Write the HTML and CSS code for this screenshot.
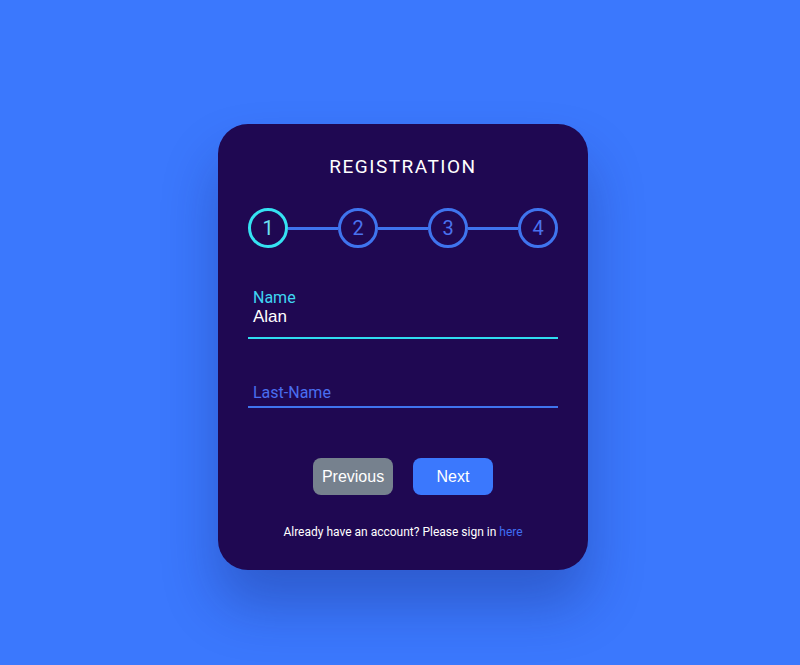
FILE: index.html
```html
<!DOCTYPE html>
<html>
<head>
<meta charset="utf-8">
<link rel="stylesheet" href="styles.css">
</head>
<body>
<div class="card">
  <h1 class="title">REGISTRATION</h1>
  <div class="steps">
    <div class="step active">1</div>
    <div class="line"></div>
    <div class="step">2</div>
    <div class="line"></div>
    <div class="step">3</div>
    <div class="line"></div>
    <div class="step">4</div>
  </div>
  <div class="field filled">
    <div class="label">Name</div>
    <div class="value">Alan</div>
  </div>
  <div class="field empty">
    <div class="placeholder">Last-Name</div>
  </div>
  <div class="buttons">
    <button class="btn prev">Previous</button>
    <button class="btn next">Next</button>
  </div>
  <p class="footer">Already have an account? Please sign in <a class="link">here</a></p>
</div>
</body>
</html>
```
FILE: styles.css
```css
html, body {
  margin: 0;
  padding: 0;
}
body {
  box-sizing: border-box;
  background: #3b78fd;
  height: 665px;
  overflow: hidden;
  padding-left: 6px;
  font-family: Roboto, "Liberation Sans", sans-serif;
}
.card {
  box-sizing: border-box;
  width: 370px;
  margin: 124px auto 0;
  padding: 31px 30px 31px;
  background: #1f0852;
  border-radius: 30px;
  box-shadow: 0 35px 55px rgba(20, 30, 110, 0.32);
}
.title {
  margin: 0;
  text-align: center;
  color: #ffffff;
  font-weight: 400;
  font-size: 19px;
  line-height: 24px;
  letter-spacing: 1.5px;
}
.steps {
  display: flex;
  align-items: center;
  margin-top: 29px;
}
.step {
  box-sizing: border-box;
  width: 40px;
  height: 40px;
  flex: none;
  border: 3px solid #3f74ee;
  border-radius: 50%;
  display: flex;
  align-items: center;
  justify-content: center;
  color: #4a72ee;
  font-size: 20px;
}
.step.active {
  border-color: #35e2f2;
  color: #6ee0f2;
}
.line {
  flex: 1;
  height: 3px;
  background: #3f74ee;
}
.field {
  padding-left: 5px;
  border-bottom: 2px solid #3f74ee;
}
.field.filled {
  margin-top: 41px;
  padding-bottom: 11px;
  border-bottom-color: #2fdcf0;
}
.label {
  color: #3fd6f2;
  font-size: 16px;
  line-height: 18px;
}
.value {
  color: #ffffff;
  font-family: "Liberation Sans", Arial, sans-serif;
  font-size: 17px;
  line-height: 19px;
}
.field.empty {
  margin-top: 45px;
  padding-bottom: 4px;
}
.placeholder {
  color: #4a6ef0;
  font-size: 16px;
  line-height: 18px;
}
.buttons {
  display: flex;
  justify-content: center;
  gap: 20px;
  margin-top: 50px;
}
.btn {
  width: 80px;
  height: 37px;
  border: none;
  border-radius: 8px;
  color: #ffffff;
  font-family: "Liberation Sans", Arial, sans-serif;
  font-size: 16px;
  padding: 0;
}
.btn.prev {
  background: #76818e;
}
.btn.next {
  background: #3b78fd;
}
.footer {
  margin: 30px 0 0;
  text-align: center;
  color: #ffffff;
  font-size: 12px;
  line-height: 14px;
}
.link {
  color: #3f6ff5;
}
```
